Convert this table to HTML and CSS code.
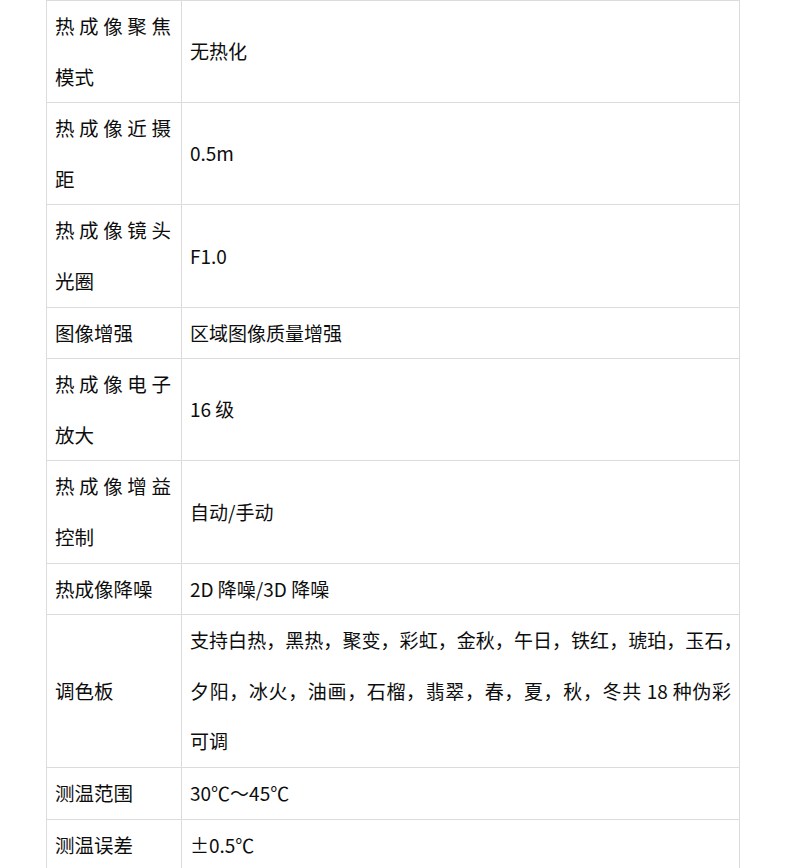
FILE: index.html
```html
<!DOCTYPE html>
<html lang="zh-CN">
<head>
<meta charset="utf-8">
<title>参数</title>
<link rel="stylesheet" href="styles.css">
</head>
<body>
<table class="spec">
  <colgroup><col class="c-name"><col class="c-val"></colgroup>
  <tbody>
    <tr><td class="name">热成像聚焦模式</td><td class="val">无热化</td></tr>
    <tr><td class="name">热成像近摄距</td><td class="val">0.5m</td></tr>
    <tr><td class="name">热成像镜头光圈</td><td class="val">F1.0</td></tr>
    <tr><td class="name">图像增强</td><td class="val">区域图像质量增强</td></tr>
    <tr><td class="name">热成像电子放大</td><td class="val">16 级</td></tr>
    <tr><td class="name">热成像增益控制</td><td class="val">自动/手动</td></tr>
    <tr><td class="name">热成像降噪</td><td class="val">2D 降噪/3D 降噪</td></tr>
    <tr><td class="name">调色板</td><td class="val">支持白热，黑热，聚变，彩虹，金秋，午日，铁红，琥珀，玉石<span class="half">，</span>夕阳，冰火，油画，石榴，翡翠，春，夏，秋，冬共 18 种伪彩可调</td></tr>
    <tr><td class="name">测温范围</td><td class="val">30℃～45℃</td></tr>
    <tr><td class="name">测温误差</td><td class="val">±0.5℃</td></tr>
  </tbody>
</table>
</body>
</html>
```

FILE: styles.css
```css
html, body {
  margin: 0;
  padding: 0;
  background: #ffffff;
}

.spec {
  margin-left: 46px;
  width: 694px;
  border-collapse: collapse;
  table-layout: fixed;
  font-family: "Noto Sans CJK SC", "Noto Sans", sans-serif;
  font-size: 19px;
  line-height: 50.6px;
  color: #0d0d0d;
}

.c-name { width: 135px; }

.spec td {
  border: 1px solid #dcdcdc;
  padding: 0 8px;
  vertical-align: middle;
  text-align: justify;
}

.spec td.name {
  font-size: 19.5px;
  padding-right: 10px;
}

/* line-end comma set half width, as the reference trims it */
.half {
  font-feature-settings: "halt" 1;
  letter-spacing: -2px;
}
```
